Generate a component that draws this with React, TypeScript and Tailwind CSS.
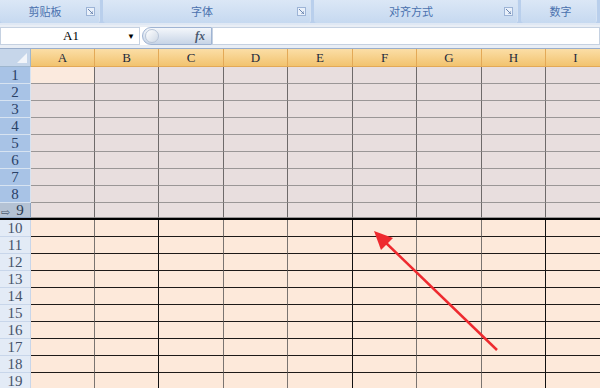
import React from "react";

const COLS = [
  { label: "A", w: 64 },
  { label: "B", w: 64 },
  { label: "C", w: 65 },
  { label: "D", w: 64 },
  { label: "E", w: 65 },
  { label: "F", w: 64 },
  { label: "G", w: 65 },
  { label: "H", w: 64 },
  { label: "I", w: 60 },
];

const GROUPS = [
  { label: "剪贴板", w: 103, launcher: true },
  { label: "字体", w: 211, launcher: true },
  { label: "对齐方式", w: 207, launcher: true },
  { label: "数字", w: 79, launcher: false },
];

const serif = { fontFamily: '"Liberation Serif", "DejaVu Serif", serif' };

function Launcher() {
  return (
    <span className="ml-auto mr-[4px] flex h-[9px] w-[9px] items-center justify-center border border-[#9db4d6] bg-[#e9f0fa]">
      <svg width="5" height="5" viewBox="0 0 5 5">
        <path d="M0 0 L5 5 M5 2 V5 H2" stroke="#6a86b0" strokeWidth="1" fill="none" />
      </svg>
    </span>
  );
}

function Ribbon() {
  return (
    <div className="flex h-[23px] bg-[#b9cfec]">
      {GROUPS.map((g) => (
        <div
          key={g.label}
          className="mr-[3px] flex shrink-0 items-center rounded-b-[3px] border-r border-[#d6e3f3] bg-gradient-to-b from-[#dbe7f6] to-[#c6d9f0] pl-1 last:mr-0"
          style={{ width: g.w - 3 }}
        >
          <span
            className="flex-1 text-center text-[11px] text-[#4a71ae]"
            style={{ fontFamily: '"Noto Sans CJK SC", sans-serif' }}
          >
            {g.label}
          </span>
          {g.launcher && <Launcher />}
        </div>
      ))}
    </div>
  );
}

function FormulaBar() {
  return (
    <div className="flex h-[24px] flex-col bg-[#e9eef5]">
      <div className="mt-[2px] flex h-[18px] bg-white">
        <div className="flex w-[140px] shrink-0 items-center border border-[#c5d1e1] bg-white">
          <span className="flex-1 pl-[14px] text-center text-[13px] text-black" style={serif}>
            A1
          </span>
          <span className="mr-[4px] text-[8px] leading-none text-black">▼</span>
        </div>
        <div className="ml-[2px] flex w-[70px] shrink-0 items-center rounded-l-full border border-[#9fb4d3] bg-gradient-to-b from-[#f4f7fb] to-[#c7d4e6]">
          <span className="ml-[2px] h-[14px] w-[14px] rounded-full border border-[#b8c5d8] bg-gradient-to-br from-white to-[#cfd9e6]" />
          <span className="ml-auto mr-[6px] text-[12px] italic font-bold text-[#4b5a70]" style={serif}>
            fx
          </span>
        </div>
        <div className="flex-1 border border-[#c5d1e1] bg-white" />
      </div>
      <div className="mt-auto h-[1px] bg-[#9aaecb]" />
    </div>
  );
}

function HeaderRow() {
  return (
    <div className="flex h-[18px]">
      <div className="relative w-[31px] shrink-0 border-r border-b border-[#9eb6ce] bg-[#c6d6ea]">
        <svg className="absolute right-[3px] bottom-[3px]" width="10" height="10" viewBox="0 0 10 10">
          <path d="M10 0 V10 H0 Z" fill="#f2f5fa" />
        </svg>
      </div>
      {COLS.map((c) => (
        <div
          key={c.label}
          className="flex shrink-0 items-center justify-center border-r border-b border-[#e3a957] bg-gradient-to-b from-[#fbdea6] to-[#f2c36e] text-[13px] text-[#1d2a3c]"
          style={{ ...serif, width: c.w }}
        >
          {c.label}
        </div>
      ))}
    </div>
  );
}

function Row({ n }: { n: number }) {
  const top = n <= 9;
  const isNine = n === 9;
  return (
    <div className={`flex h-[17px] ${isNine ? "border-b-2 border-black" : ""}`}>
      <div
        className={`relative flex w-[31px] shrink-0 items-center justify-center border-r border-b text-[15px] ${
          isNine
            ? "border-[#8ca4c2] bg-[#b4c2d4] text-[#2a3a50]"
            : top
            ? "border-[#d7e3f1] bg-[#a8c3e6] text-[#2a4166]"
            : "border-[#c8d6ea] bg-[#e3ebf6] text-[#46536a]"
        }`}
        style={serif}
      >
        {isNine && (
          <span className="absolute left-[1px] top-[1px] text-[11px] text-[#4a5a70]">⇨</span>
        )}
        <span className={isNine ? "pl-[10px]" : ""}>{n}</span>
      </div>
      {COLS.map((c, i) => (
        <div
          key={c.label}
          className={`shrink-0 border-b ${
            top ? "border-b-[#9a9696]" : "border-b-[#1e1a18]"
          } border-r ${
            top ? "border-r-[#6e6a6a]" : i === 1 || i === 4 || i === 7 ? "border-r-[#111]" : "border-r-[#7a7470]"
          } ${
            top
              ? n === 1 && i === 0
                ? "bg-[#fbeade]"
                : "bg-[#e8dede]"
              : "bg-[#fde9da]"
          }`}
          style={{ width: c.w }}
        />
      ))}
    </div>
  );
}

export default function App() {
  const rows = Array.from({ length: 19 }, (_, i) => i + 1);
  return (
    <div className="relative h-[388px] w-[600px] overflow-hidden bg-white">
      <Ribbon />
      <div className="h-[2px] bg-[#dfe8f4]" />
      <FormulaBar />
      <HeaderRow />
      {rows.map((n) => (
        <Row key={n} n={n} />
      ))}
      <svg className="absolute left-0 top-0" width="600" height="388" viewBox="0 0 600 388">
        <line x1="497" y1="350" x2="384" y2="241" stroke="#ee2a2f" strokeWidth="2.5" />
        <path d="M374 231 L393 238 L381 250 Z" fill="#ee2a2f" />
      </svg>
    </div>
  );
}
